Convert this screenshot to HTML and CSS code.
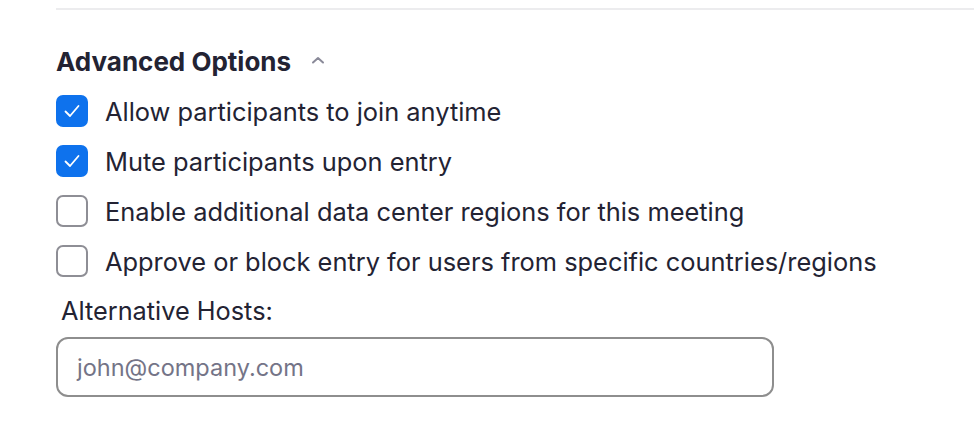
FILE: index.html
```html
<!DOCTYPE html>
<html>
<head>
<meta charset="utf-8">
<link rel="stylesheet" href="styles.css">
</head>
<body>
<div class="page">
  <div class="divider"></div>
  <div class="section">
    <div class="heading">
      <span class="heading-text">Advanced Options</span>
      <svg class="chevron" width="14" height="8" viewBox="0 0 14 8"><path d="M2 6.5 L7 2 L12 6.5" fill="none" stroke="#8a8a99" stroke-width="2" stroke-linecap="round" stroke-linejoin="round"/></svg>
    </div>
    <div class="options">
      <label class="option">
        <span class="box checked"><svg width="20" height="16" viewBox="0 0 20 16"><path d="M3.5 8.5 L8 13 L16.5 3" fill="none" stroke="#fff" stroke-width="1.8" stroke-linecap="round" stroke-linejoin="round"/></svg></span>
        <span class="label">Allow participants to join anytime</span>
      </label>
      <label class="option">
        <span class="box checked"><svg width="20" height="16" viewBox="0 0 20 16"><path d="M3.5 8.5 L8 13 L16.5 3" fill="none" stroke="#fff" stroke-width="1.8" stroke-linecap="round" stroke-linejoin="round"/></svg></span>
        <span class="label">Mute participants upon entry</span>
      </label>
      <label class="option">
        <span class="box"></span>
        <span class="label">Enable additional data center regions for this meeting</span>
      </label>
      <label class="option">
        <span class="box"></span>
        <span class="label">Approve or block entry for users from specific countries/regions</span>
      </label>
    </div>
    <div class="field-label">Alternative Hosts:</div>
    <div class="input"><span class="placeholder">john@company.com</span></div>
  </div>
</div>
</body>
</html>
```
FILE: styles.css
```css
html, body {
  margin: 0;
  padding: 0;
  background: #ffffff;
}
body {
  font-family: "Inter", "Liberation Sans", sans-serif;
  color: #232333;
}
.page {
  padding-top: 8px;
  padding-left: 56px;
}
.divider {
  height: 2px;
  background: #ececee;
}
.section {
  padding-top: 35px;
}
.heading {
  display: flex;
  align-items: center;
  height: 32px;
}
.heading-text {
  font-size: 26px;
  font-weight: 700;
}
.chevron {
  margin-left: 20px;
  margin-top: -2px;
}
.options {
  display: flex;
  flex-direction: column;
  gap: 18px;
  margin-top: 18px;
}
.option {
  display: flex;
  align-items: center;
  height: 32px;
}
.box {
  width: 32px;
  height: 32px;
  box-sizing: border-box;
  border: 2px solid #8e8e95;
  border-radius: 7px;
  display: flex;
  align-items: center;
  justify-content: center;
  flex: none;
}
.box.checked {
  background: #0e72ed;
  border-color: #0e72ed;
}
.label {
  margin-left: 17px;
  font-size: 25.4px;
}
.field-label {
  margin-top: 18px;
  margin-left: 5px;
  font-size: 25.3px;
  height: 32px;
  line-height: 32px;
}
.input {
  margin-top: 10px;
  width: 718px;
  height: 60px;
  box-sizing: border-box;
  border: 2px solid #8e8e8e;
  border-radius: 12px;
  display: flex;
  align-items: center;
  padding-left: 19px;
}
.placeholder {
  font-size: 23.5px;
  color: #747487;
}
```
